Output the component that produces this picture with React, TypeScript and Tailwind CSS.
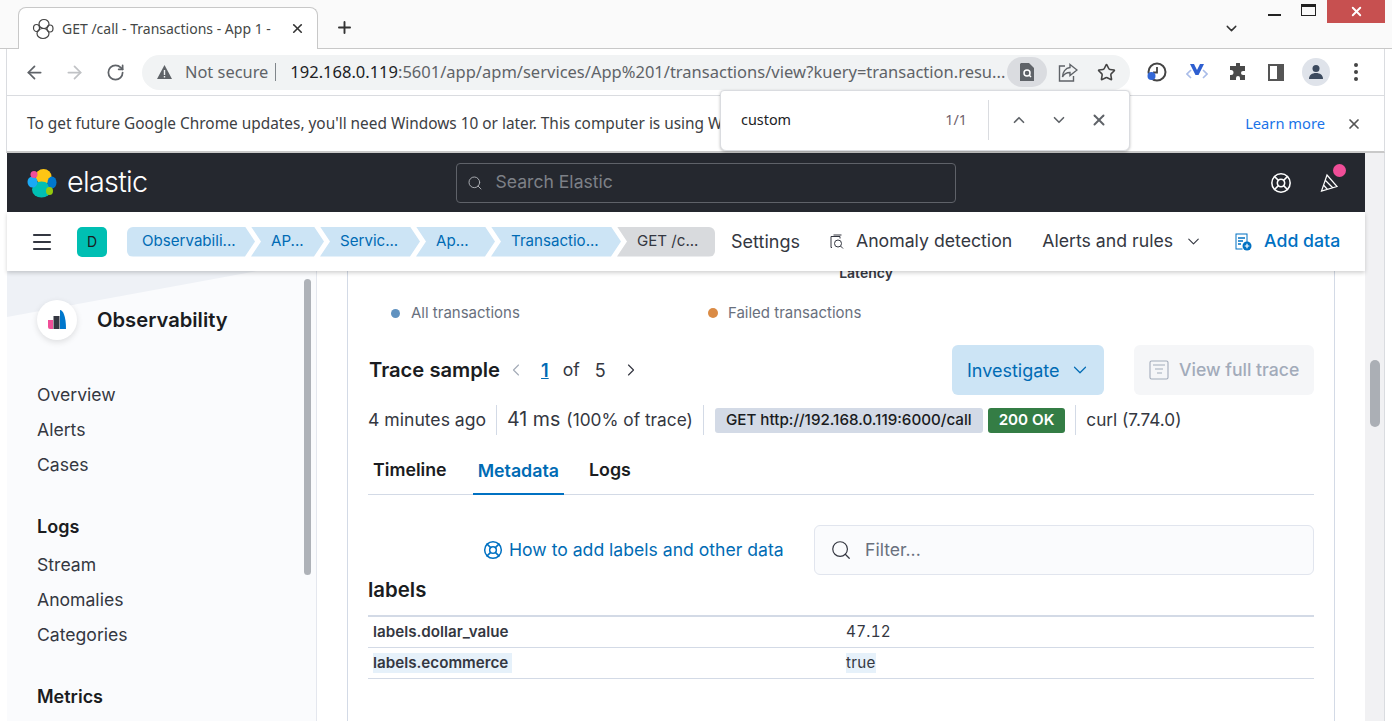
import React from 'react';
import { ArrowLeft, ArrowRight, RotateCw, Star, ChevronDown, ChevronUp, ChevronLeft, ChevronRight, X, Plus, Search, LifeBuoy, Menu } from 'lucide-react';

const chrome = "font-['Noto_Sans','Open_Sans',sans-serif]";

const ElasticMark = () => (
  <svg width="30" height="30" viewBox="0 0 30 30">
    <ellipse cx="16.5" cy="8.5" rx="8" ry="7.5" fill="#fec514" />
    <ellipse cx="14.5" cy="21.5" rx="9.5" ry="8" fill="#00bfb3" />
    <ellipse cx="5.5" cy="14" rx="5" ry="5.5" fill="#1ba9f5" />
    <ellipse cx="25" cy="14.5" rx="4.5" ry="6" fill="#0077cc" />
    <ellipse cx="7" cy="6.5" rx="3.5" ry="3.5" fill="#f04e98" />
    <ellipse cx="22.5" cy="23" rx="3.5" ry="4" fill="#93c90e" />
  </svg>
);

const Crumb = ({ text, width, first, last }: { text: string; width: string; first?: boolean; last?: boolean }) => (
  <div
    className={`${width} h-[30px] flex items-center shrink-0 text-[15.1px] ${
      first
        ? 'pl-[15px] rounded-l-md [clip-path:polygon(0_0,calc(100%-10px)_0,100%_50%,calc(100%-10px)_100%,0_100%)]'
        : last
          ? '-ml-[4px] pl-[20px] rounded-r-md [clip-path:polygon(0_0,100%_0,100%_100%,0_100%,10px_50%)]'
          : '-ml-[4px] pl-[20px] [clip-path:polygon(0_0,calc(100%-10px)_0,100%_50%,calc(100%-10px)_100%,0_100%,10px_50%)]'
    } ${last ? 'bg-[#d8dadd] text-[#343741]' : 'bg-[#cce4f5] text-[#006bb4]'}`}
  >
    {text}
  </div>
);

const SideSection = ({ title, items }: { title?: string; items: string[] }) => (
  <div className="mb-[32px]">
    {title && <div className="font-semibold text-[18px] leading-[24px] text-[#1a1c21] mb-[9px]">{title}</div>}
    {items.map(i => (
      <div key={i} className="h-[35px] flex items-center text-[17.6px] text-[#343741]">{i}</div>
    ))}
  </div>
);

export default function App() {
  return (
    <div className="relative w-[1392px] h-[721px] overflow-hidden bg-white flex flex-col font-['Inter',sans-serif]">
      {/* tab strip */}
      <div className={`${chrome} h-[49px] shrink-0 bg-[#fafafa] border-b border-[#c8c8c8] flex items-end pl-[18px] relative`}>
        <div className="w-[300px] h-[42px] -mb-px bg-white border border-b-0 border-[#c8c8c8] rounded-t-lg flex items-center pl-[13px] pr-[12px] text-[#444746]">
          <svg width="22" height="22" viewBox="0 0 22 22" fill="none" stroke="#444" strokeWidth="1.2" className="shrink-0">
            <ellipse cx="12" cy="6" rx="5" ry="4.5" />
            <ellipse cx="11" cy="15.5" rx="6" ry="5" />
            <ellipse cx="4.5" cy="10" rx="3" ry="3.5" />
            <ellipse cx="18" cy="10.5" rx="3" ry="3.5" />
          </svg>
          <span className="ml-[8px] flex-1 whitespace-nowrap overflow-hidden text-[14px]">GET /call - Transactions - App 1 -</span>
          <X size={15} strokeWidth={2.6} className="text-[#333] ml-1" />
        </div>
        <Plus size={19} strokeWidth={2.4} className="ml-[17px] mb-[11px] text-[#333]" />
        <ChevronDown size={17} strokeWidth={2} className="absolute left-[1223px] top-[20px] text-[#333]" />
        <div className="absolute right-[7px] top-0 h-[23px] flex items-start">
          <div className="w-[13px] h-[2px] bg-[#222] mt-[14px] mr-[20px]" />
          <div className="w-[15px] h-[12px] border-[1.5px] border-t-[3px] border-[#222] mt-[4px] mr-[11px]" />
          <div className="w-[58px] h-[23px] bg-[#c75050] flex items-center justify-center">
            <X size={15} strokeWidth={3} className="text-white" />
          </div>
        </div>
      </div>

      {/* toolbar */}
      <div className={`${chrome} h-[47px] shrink-0 ml-[6px] mr-[7px] bg-white border-x border-b border-[#dadce0] flex items-center pl-[17px] text-[#5f6368]`}>
        <ArrowLeft size={21} strokeWidth={2} className="text-[#5f6368]" />
        <ArrowRight size={21} strokeWidth={2} className="ml-[19px] text-[#c0c2c5]" />
        <RotateCw size={19} strokeWidth={2.2} className="ml-[21px] text-[#5f6368]" />
        <div className="ml-[17px] w-[988px] h-[35px] rounded-full bg-[#f1f3f4] flex items-center pl-[15px]">
          <svg width="15" height="14" viewBox="0 0 15 14" className="shrink-0"><path d="M7.5 0 15 14H0z" fill="#5f6368" /><rect x="6.8" y="5" width="1.4" height="5" fill="#f1f3f4" /><rect x="6.8" y="11" width="1.4" height="1.5" fill="#f1f3f4" /></svg>
          <span className="ml-[13px] text-[16.4px] text-[#5f6368] whitespace-nowrap">Not secure</span>
          <span className="ml-[7px] w-px h-[18px] bg-[#80868b]" />
          <div className="ml-[14px] w-[715px] whitespace-nowrap overflow-hidden text-[16.5px] text-[#5f6368]">
            <span className="text-[#202124]">192.168.0.119</span>:5601/app/apm/services/App%201/transactions/view?kuery=transaction.resu...
          </div>
          <div className="ml-[2px] w-[40px] h-[30px] rounded-full bg-[#dadce0] flex items-center justify-center">
            <svg width="14" height="18" viewBox="0 0 14 18"><path d="M1 0h8l5 5v13H0V1z" fill="#5f6368" /><circle cx="7" cy="10" r="3" fill="none" stroke="#fff" strokeWidth="1.5" /><path d="m9 12 2 2" stroke="#fff" strokeWidth="1.5" /></svg>
          </div>
          <svg width="20" height="19" viewBox="0 0 20 19" fill="none" stroke="#5f6368" strokeWidth="1.4" className="ml-[11px] shrink-0">
            <path d="M7 3H1.5v15h14v-5" />
            <path d="M12 1.5 19 7l-7 5.5V9.5c-3.5 0-6 1.5-7.5 4.5C4.5 9 7.5 5 12 4.5z" />
          </svg>
          <Star size={19} strokeWidth={2} className="ml-[19px] text-[#444]" />
        </div>
        <svg width="22" height="22" viewBox="0 0 22 22" fill="none" className="ml-[15px] shrink-0">
          <circle cx="12" cy="11" r="8.5" stroke="#444" strokeWidth="2" />
          <path d="M12 6v5.5H8" stroke="#444" strokeWidth="1.8" />
          <circle cx="6.5" cy="15" r="4" fill="#3367d6" />
        </svg>
        <svg width="22" height="18" viewBox="0 0 22 18" className="ml-[19px] shrink-0">
          <path d="M5 7 1 11l4 4M17 7l4 4-4 4" fill="none" stroke="#a9bce8" strokeWidth="1.6" />
          <path d="M4 1h4l3 6 3-6h4l-5.5 11h-3z" fill="#2f5fd0" />
        </svg>
        <svg width="18" height="18" viewBox="0 0 18 18" className="ml-[21px] shrink-0"><path d="M7 1a2 2 0 0 1 4 0v2h5v5h-2a2 2 0 0 0 0 4h2v5h-5v-2a2 2 0 0 0-4 0v2H1v-5h1a2.5 2.5 0 0 0 0-5H1V3h6z" fill="#4a4a4a" /></svg>
        <div className="ml-[21px] w-[16px] h-[17px] border-2 border-r-[7px] border-[#555] shrink-0" />
        <div className="ml-[18px] w-[28px] h-[28px] rounded-full bg-[#dfe3ea] flex items-center justify-center shrink-0">
          <svg width="18" height="18" viewBox="0 0 18 18" fill="#3c4a5e"><circle cx="9" cy="5.5" r="3.5" /><path d="M2 16c0-4 3-6 7-6s7 2 7 6z" /></svg>
        </div>
        <div className="ml-[24px] flex flex-col gap-[3px]">
          <span className="w-[4px] h-[4px] rounded-full bg-[#444]" />
          <span className="w-[4px] h-[4px] rounded-full bg-[#444]" />
          <span className="w-[4px] h-[4px] rounded-full bg-[#444]" />
        </div>
      </div>

      {/* update infobar */}
      <div className={`${chrome} h-[57px] shrink-0 ml-[6px] mr-[7px] bg-white border-x border-x-[#dadce0] border-b-2 border-b-[#c9c9c9] flex items-center pl-[20px] pr-[22px] text-[15.4px] text-[#3c4043]`}>
        <span className="whitespace-nowrap">To get future Google Chrome updates, you'll need Windows 10 or later. This computer is using W</span>
        <span className="ml-auto text-[#1a73e8] text-[14.7px]">Learn more</span>
        <X size={16} strokeWidth={2.6} className="ml-[21px] text-[#555]" />
      </div>

      {/* kibana page */}
      <div className="flex-1 min-h-0 ml-[7px] flex">
        <div className="w-[1358px] shrink-0 flex flex-col min-h-0">
          <div className="h-[59px] shrink-0 bg-[#25282f] flex items-center pl-[20px] pr-[23px]">
            <ElasticMark />
            <span className="ml-[10px] text-[28.8px] font-light text-white tracking-tight leading-none">elastic</span>
            <div className="ml-[309px] w-[500px] h-[40px] border border-[#5f6269] rounded-[4px] flex items-center pl-[10px]">
              <Search size={16} strokeWidth={1.4} className="text-[#b0b3b8]" />
              <span className="ml-[12px] text-[17.6px] text-[#7d8087]">Search Elastic</span>
            </div>
            <LifeBuoy size={22} strokeWidth={1.7} className="ml-auto text-white" />
            <div className="relative ml-[28px] w-[20px] h-[20px] mr-[2px]">
              <svg width="20" height="20" viewBox="0 0 20 20" fill="none" stroke="#fff" strokeWidth="1.2">
                <path d="M7 2 1.5 18 17 13.5zM5 7l8 8M3.5 12l4 4.5" />
              </svg>
              <span className="absolute -top-[9px] right-[-6px] w-[13px] h-[13px] rounded-full bg-[#f04e98]" />
            </div>
          </div>

          <div className="relative z-10 h-[59px] shrink-0 bg-white shadow-[0_2px_4px_rgba(0,0,0,0.18)] flex items-center pl-[23px] text-[17.7px] text-[#343741]">
            <Menu size={24} strokeWidth={2.2} className="text-[#343741]" />
            <div className="ml-[23px] mr-[20px] w-[30px] h-[30px] rounded-[5px] bg-[#00bfb3] flex items-center justify-center text-[14px] text-[#1a1c21]">D</div>
            <Crumb first text="Observabili..." width="w-[128px]" />
            <Crumb text="AP..." width="w-[73px]" />
            <Crumb text="Servic..." width="w-[100px]" />
            <Crumb text="Ap..." width="w-[79px]" />
            <Crumb text="Transactio..." width="w-[130px]" />
            <Crumb last text="GET /c..." width="w-[98px]" />
            <span className="ml-[16px] text-[18px]">Settings</span>
            <svg width="16" height="16" viewBox="0 0 16 16" fill="none" stroke="#343741" strokeWidth="1" className="ml-[29px]">
              <path d="M3 13.5H2V2.5h9v2" /><path d="M4.5 1h8" /><circle cx="9" cy="9.5" r="3.5" /><path d="m11.5 12 2.5 2.5" />
            </svg>
            <span className="ml-[11px]">Anomaly detection</span>
            <span className="ml-[30px]">Alerts and rules</span>
            <ChevronDown size={19} strokeWidth={1.4} className="ml-[11px]" />
            <svg width="18" height="18" viewBox="0 0 18 18" className="ml-[31px]">
              <path d="M1.5.5h12v9h-1v-8h-10v14h6v1h-7z" fill="#0071c2" /><path d="M4 5h7M4 8h5M4 11h3" stroke="#0071c2" strokeWidth="1.4" />
              <circle cx="13" cy="13" r="4.5" fill="#0071c2" /><path d="M13 10.7v4.6M10.7 13h4.6" stroke="#fff" strokeWidth="1.2" />
            </svg>
            <span className="ml-[12px] font-medium text-[#0071c2]">Add data</span>
          </div>

          <div className="flex-1 min-h-0 flex overflow-hidden">
            {/* side nav */}
            <aside className="relative w-[310px] shrink-0 bg-[#fafbfd] border-r border-[#e4e7ee] overflow-hidden">
              <svg className="absolute left-0 top-0" width="250" height="46" viewBox="0 0 250 46">
                <path d="M0 0h250L0 46z" fill="#eef1f6" />
              </svg>
              <div className="absolute right-[5px] top-[8px] w-[7px] h-[296px] rounded bg-[#aeb2b8]" />
              <div className="relative pl-[30px] pt-[29px]">
                <div className="flex items-center mb-[38px]">
                  <div className="w-[40px] h-[40px] rounded-full bg-white shadow-[0_2px_6px_rgba(0,0,0,0.12)] flex items-center justify-center">
                    <svg width="20" height="20" viewBox="0 0 20 20">
                      <path d="M1 10h5v9H3a2 2 0 0 1-2-2z" fill="#f04e98" />
                      <rect x="6.5" y="6" width="6" height="13" fill="#343741" />
                      <path d="M13 0c3 0 6 6 6 19h-6z" fill="#0077cc" />
                    </svg>
                  </div>
                  <span className="ml-[20px] text-[20.2px] font-semibold text-[#1a1c21]">Observability</span>
                </div>
                <SideSection items={['Overview', 'Alerts', 'Cases']} />
                <SideSection title="Logs" items={['Stream', 'Anomalies', 'Categories']} />
                <SideSection title="Metrics" items={[]} />
              </div>
            </aside>

            {/* main panel */}
            <main className="flex-1 min-w-0 pl-[30px] pr-[30px]">
              <div className="h-[calc(100%+8px)] border-x border-[#d3dae6] px-[20px] -mt-[8px]">
                <div className="text-center text-[14px] font-semibold leading-[20px] text-[#343741] pl-[50px]">Latency</div>
                <div className="mt-[20px] h-[20px] flex items-center text-[15px] text-[#69707d]">
                  <span className="ml-[23px] w-[9px] h-[9px] rounded-full bg-[#6092c0]" />
                  <span className="ml-[11px]">All transactions</span>
                  <span className="ml-[188px] w-[10px] h-[10px] rounded-full bg-[#da8b45]" />
                  <span className="ml-[10px]">Failed transactions</span>
                </div>

                <div className="mt-[22px] h-[50px] flex items-center">
                  <span className="ml-px text-[20.2px] font-semibold text-[#1a1c21]">Trace sample</span>
                  <ChevronLeft size={20} strokeWidth={1.4} className="ml-[6px] text-[#a5acb8]" />
                  <span className="ml-[15px] text-[#006bb4] underline font-semibold text-[18px]">1</span>
                  <span className="ml-[14px] text-[17.6px] text-[#343741]">of</span>
                  <span className="ml-[15px] text-[18px] text-[#343741]">5</span>
                  <ChevronRight size={20} strokeWidth={1.4} className="ml-[15px] text-[#343741]" />
                  <div className="ml-auto w-[152px] h-[50px] rounded-[6px] bg-[#cce4f5] text-[#006bb4] text-[18px] flex items-center pl-[15px]">
                    Investigate
                    <ChevronDown size={22} strokeWidth={1.3} className="ml-[9px]" />
                  </div>
                  <div className="ml-[30px] w-[180px] h-[50px] rounded-[6px] bg-[#f5f6f8] text-[#a2abba] text-[17.6px] font-medium flex items-center pl-[15px]">
                    <svg width="20" height="20" viewBox="0 0 20 20" fill="none" stroke="#a2abba" strokeWidth="1.1">
                      <rect x="1" y="1" width="18" height="18" rx="1.5" /><path d="M4 5h12M6 9h8M8 13h5" />
                    </svg>
                    <span className="ml-[10px]">View full trace</span>
                  </div>
                </div>

                <div className="mt-[10px] h-[30px] flex items-center text-[#343741] whitespace-nowrap">
                  <span className="text-[17.6px] pr-[10px] border-r border-[#d3dae6] leading-[30px]">4 minutes ago</span>
                  <span className="ml-[10px] text-[19.6px]">41 ms</span>
                  <span className="ml-[6px] text-[17.3px] pr-[10px] border-r border-[#d3dae6] leading-[30px]">(100% of trace)</span>
                  <span className="ml-[11px] h-[25px] rounded-[3px] bg-[#d3dae6] px-[11px] flex items-center text-[15.2px] font-medium text-[#1a1c21]">GET http://192.168.0.119:6000/call</span>
                  <span className="ml-[5px] h-[25px] rounded-[3px] bg-[#347d45] px-[11px] flex items-center text-[15.2px] font-semibold text-white">200 OK</span>
                  <span className="ml-[10px] pl-[10px] text-[17.2px] border-l border-[#d3dae6] leading-[30px]">curl (7.74.0)</span>
                </div>

                <div className="mt-[15px] h-[45px] flex items-stretch border-b border-[#d3dae6] text-[17.8px] font-semibold text-[#1a1c21]">
                  <div className="pl-[5px] pr-[6px] pb-[3px] flex items-center">Timeline</div>
                  <div className="ml-[20px] px-[5px] pb-[1px] flex items-center text-[#006bb4] border-b-2 border-[#0071c2] -mb-px">Metadata</div>
                  <div className="ml-[14px] px-[11px] pb-[3px] flex items-center">Logs</div>
                </div>

                <div className="mt-[30px] h-[50px] flex items-center">
                  <LifeBuoy size={20} strokeWidth={1.8} className="ml-[115px] text-[#0071c2]" />
                  <span className="ml-[6px] text-[17.6px] text-[#006bb4]">How to add labels and other data</span>
                  <div className="ml-auto w-[500px] h-[50px] rounded-[6px] border border-[#e1e5ee] bg-[#fafbfd] flex items-center pl-[15px] text-[17.6px] text-[#69707d]">
                    <Search size={22} strokeWidth={1.3} className="text-[#343741]" />
                    <span className="ml-[13px]">Filter...</span>
                  </div>
                </div>

                <div className="mt-[2px] h-[28px] pb-[2px] flex items-center text-[20.4px] font-semibold text-[#1a1c21]">labels</div>
                <div className="mt-[10px] border-t-2 border-[#d3dae6]">
                  {[
                    { k: 'labels.dollar_value', v: '47.12' },
                    { k: 'labels.ecommerce', v: 'true', hit: true },
                  ].map(row => (
                    <div key={row.k} className="h-[31px] border-b border-[#d3dae6] flex items-center text-[15.2px] text-[#343741]">
                      <div className="w-[478px] pl-[5px]">
                        <span className={`inline-block leading-[20px] font-semibold ${row.hit ? 'bg-[#e6f1fa] pr-[4px]' : ''}`}>{row.k}</span>
                      </div>
                      <span className={`inline-block leading-[20px] tabular-nums tracking-[0.3px] ${row.hit ? 'bg-[#e6f1fa]' : ''}`}>{row.v}</span>
                    </div>
                  ))}
                </div>
              </div>
            </main>
          </div>
        </div>

        {/* page scrollbar */}
        <div className="w-[20px] shrink-0 bg-[#f1f1f3] border-r border-[#dadce0] pt-[207px] pl-[5px]">
          <div className="w-[10px] h-[67px] rounded-full bg-[#abafb5]" />
        </div>
      </div>

      {/* find in page bubble */}
      <div className={`${chrome} absolute left-[720px] top-[90px] w-[410px] h-[61px] bg-white border border-[#dadce0] rounded-b-md rounded-t-sm shadow-[0_1px_3px_rgba(0,0,0,0.25)] flex items-center pl-[20px] pb-[2px] text-[#202124]`}>
        <span className="text-[14.4px] flex-1">custom</span>
        <span className="text-[14.4px] text-[#70616b]">1/1</span>
        <span className="ml-[21px] w-px h-[40px] bg-[#dadce0]" />
        <ChevronUp size={18} strokeWidth={2.2} className="ml-[21px] text-[#5f6368]" />
        <ChevronDown size={18} strokeWidth={2.2} className="ml-[22px] text-[#5f6368]" />
        <X size={18} strokeWidth={2.6} className="ml-[22px] mr-[21px] text-[#5f6368]" />
      </div>
    </div>
  );
}
